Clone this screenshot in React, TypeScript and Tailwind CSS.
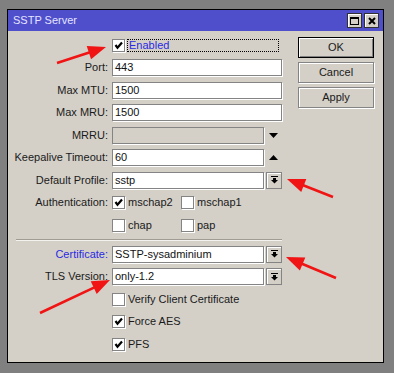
import React from 'react';

const ROW = 'h-[22.5px] flex items-center';

function Label({ text, blue }: { text?: string; blue?: boolean }) {
  return (
    <div className={blue ? 'w-[100px] shrink-0 text-right text-[#2a2ae0]' : 'w-[100px] shrink-0 text-right text-[#1a1a1a]'}>
      {text}
    </div>
  );
}

function Check({ checked }: { checked?: boolean }) {
  return (
    <span className="w-[13px] h-[13px] shrink-0 bg-white border border-[#848484] shadow-[1px_1px_0_#fff] flex items-center justify-center">
      {checked && (
        <svg width="9" height="9" viewBox="0 0 9 9">
          <path d="M1.5 4 L3.5 6.8 L8 1.5" stroke="#000" strokeWidth="2.2" fill="none" />
        </svg>
      )}
    </span>
  );
}

function CheckItem({ checked, text, wide }: { checked?: boolean; text: string; wide?: boolean }) {
  return (
    <div className={wide ? 'w-[69px] flex items-center gap-[3px]' : 'flex items-center gap-[3px]'}>
      <Check checked={checked} />
      <span className="text-[#1a1a1a]">{text}</span>
    </div>
  );
}

function Field({ value, short, disabled }: { value?: string; short?: boolean; disabled?: boolean }) {
  const w = short ? 'w-[152px]' : 'w-[170px]';
  const bg = disabled ? 'bg-[#d4d0c8]' : 'bg-white';
  return (
    <div className={`${w} ${bg} h-[17px] shrink-0 border border-[#848484] shadow-[1px_1px_0_#fff] flex items-center pl-[2px] text-[#111]`}>
      {value}
    </div>
  );
}

function DropButton() {
  return (
    <div className="w-[16px] h-[17px] ml-[2px] shrink-0 bg-[#d4d0c8] border border-[#848484] shadow-[inset_1px_1px_0_#fff] flex items-center justify-center">
      <svg width="7" height="8" viewBox="0 0 7 8">
        <rect x="0" y="0" width="7" height="1" fill="#000" />
        <rect x="2" y="2" width="3" height="2" fill="#000" />
        <polygon points="0,4 7,4 3.5,7.5" fill="#000" />
      </svg>
    </div>
  );
}

function Triangle({ up }: { up?: boolean }) {
  return (
    <div className="w-[18px] flex justify-center">
      <svg width="9" height="5" viewBox="0 0 9 5">
        <polygon points={up ? '0,5 9,5 4.5,0' : '0,0 9,0 4.5,5'} fill="#000" />
      </svg>
    </div>
  );
}

function Arrow({ x1, y1, x2, y2 }: { x1: number; y1: number; x2: number; y2: number }) {
  const dx = x2 - x1;
  const dy = y2 - y1;
  const len = Math.hypot(dx, dy);
  const ux = dx / len;
  const uy = dy / len;
  const hl = 18;
  const hw = 7;
  const bx = x2 - ux * hl;
  const by = y2 - uy * hl;
  const px = -uy;
  const py = ux;
  return (
    <g>
      <line x1={x1} y1={y1} x2={bx + ux * 2} y2={by + uy * 2} stroke="#f01414" strokeWidth="2.6" />
      <polygon
        points={`${x2},${y2} ${bx + px * hw},${by + py * hw} ${bx - px * hw},${by - py * hw}`}
        fill="#f01414"
      />
    </g>
  );
}

function Button({ text, primary }: { text: string; primary?: boolean }) {
  return (
    <div
      className={
        primary
          ? 'w-[76px] h-[21px] border border-black shadow-[inset_1px_1px_0_#fff,inset_-1px_-1px_0_#808080] flex items-center justify-center text-[#1a1a1a]'
          : 'w-[76px] h-[21px] border border-[#848484] shadow-[1px_1px_0_#fff,inset_1px_1px_0_#fff] flex items-center justify-center text-[#1a1a1a]'
      }
    >
      {text}
    </div>
  );
}

export default function App() {
  return (
    <div className="relative w-[394px] h-[373px] bg-[#808080] pl-[7px] pt-[9px] font-['Liberation_Sans',Arial,sans-serif] text-[11px] leading-none">
      <div className="w-[377px] h-[354px] border border-black bg-[#d4d0c8] flex flex-col">
        {/* title bar */}
        <div className="h-[21px] bg-[#4f4fcc] flex items-center pl-[5px] pr-[4px]">
          <span className="text-[#e4e4ff]">SSTP Server</span>
          <div className="ml-auto flex gap-[2px]">
            <div className="w-[15px] h-[15px] bg-[#d4d0c8] border border-[#303030] shadow-[inset_1px_1px_0_#fff] flex items-center justify-center">
              <div className="w-[9px] h-[8px] border border-black border-t-2" />
            </div>
            <div className="w-[15px] h-[15px] bg-[#d4d0c8] border border-[#303030] shadow-[inset_1px_1px_0_#fff] flex items-center justify-center">
              <svg width="8" height="8" viewBox="0 0 8 8">
                <path d="M1 1 L7 7 M7 1 L1 7" stroke="#000" strokeWidth="2" />
              </svg>
            </div>
          </div>
        </div>

        <div className="flex flex-1">
          <div className="w-[274px] pt-[2.75px]">
            <div className={ROW}>
              <Label />
              <div className="ml-[4px] flex items-center">
                <Check checked />
                <div className="ml-[2px] w-[152px] h-[13px] border border-dotted border-black pl-[1px] flex items-center text-[#2a2ae0]">
                  Enabled
                </div>
              </div>
            </div>
            <div className={ROW}>
              <Label text="Port:" />
              <div className="ml-[4px]"><Field value="443" /></div>
            </div>
            <div className={ROW}>
              <Label text="Max MTU:" />
              <div className="ml-[4px]"><Field value="1500" /></div>
            </div>
            <div className={ROW}>
              <Label text="Max MRU:" />
              <div className="ml-[4px]"><Field value="1500" /></div>
            </div>
            <div className={ROW}>
              <Label text="MRRU:" />
              <div className="ml-[4px] flex items-center">
                <Field short disabled />
                <Triangle />
              </div>
            </div>
            <div className={ROW}>
              <Label text="Keepalive Timeout:" />
              <div className="ml-[4px] flex items-center">
                <Field short value="60" />
                <Triangle up />
              </div>
            </div>
            <div className={ROW}>
              <Label text="Default Profile:" />
              <div className="ml-[4px] flex items-center">
                <Field short value="sstp" />
                <DropButton />
              </div>
            </div>
            <div className={ROW}>
              <Label text="Authentication:" />
              <div className="ml-[4px] flex items-center">
                <CheckItem wide checked text="mschap2" />
                <CheckItem text="mschap1" />
              </div>
            </div>
            <div className={ROW}>
              <Label />
              <div className="ml-[4px] flex items-center">
                <CheckItem wide text="chap" />
                <CheckItem text="pap" />
              </div>
            </div>

            <div className="h-[6.5px] flex items-center">
              <div className="ml-[8px] w-[266px] h-[2px] border-t border-[#a09c94] border-b border-b-[#f4f2ee]" />
            </div>

            <div className={ROW}>
              <Label text="Certificate:" blue />
              <div className="ml-[4px] flex items-center">
                <Field short value="SSTP-sysadminium" />
                <DropButton />
              </div>
            </div>
            <div className={ROW}>
              <Label text="TLS Version:" />
              <div className="ml-[4px] flex items-center">
                <Field short value="only-1.2" />
                <DropButton />
              </div>
            </div>
            <div className={ROW}>
              <Label />
              <div className="ml-[4px]"><CheckItem text="Verify Client Certificate" /></div>
            </div>
            <div className={ROW}>
              <Label />
              <div className="ml-[4px]"><CheckItem checked text="Force AES" /></div>
            </div>
            <div className={ROW}>
              <Label />
              <div className="ml-[4px]"><CheckItem checked text="PFS" /></div>
            </div>
          </div>

          <div className="ml-[16px] pt-[6px] flex flex-col gap-[4px]">
            <Button primary text="OK" />
            <Button text="Cancel" />
            <Button text="Apply" />
          </div>
        </div>
      </div>

      <svg className="absolute inset-0 pointer-events-none" width="394" height="373" viewBox="0 0 394 373">
        <Arrow x1={57} y1={63} x2={106} y2={47} />
        <Arrow x1={333} y1={197} x2={287} y2={179} />
        <Arrow x1={336} y1={278} x2={286} y2={257} />
        <Arrow x1={40} y1={313} x2={110} y2={280} />
      </svg>
    </div>
  );
}
